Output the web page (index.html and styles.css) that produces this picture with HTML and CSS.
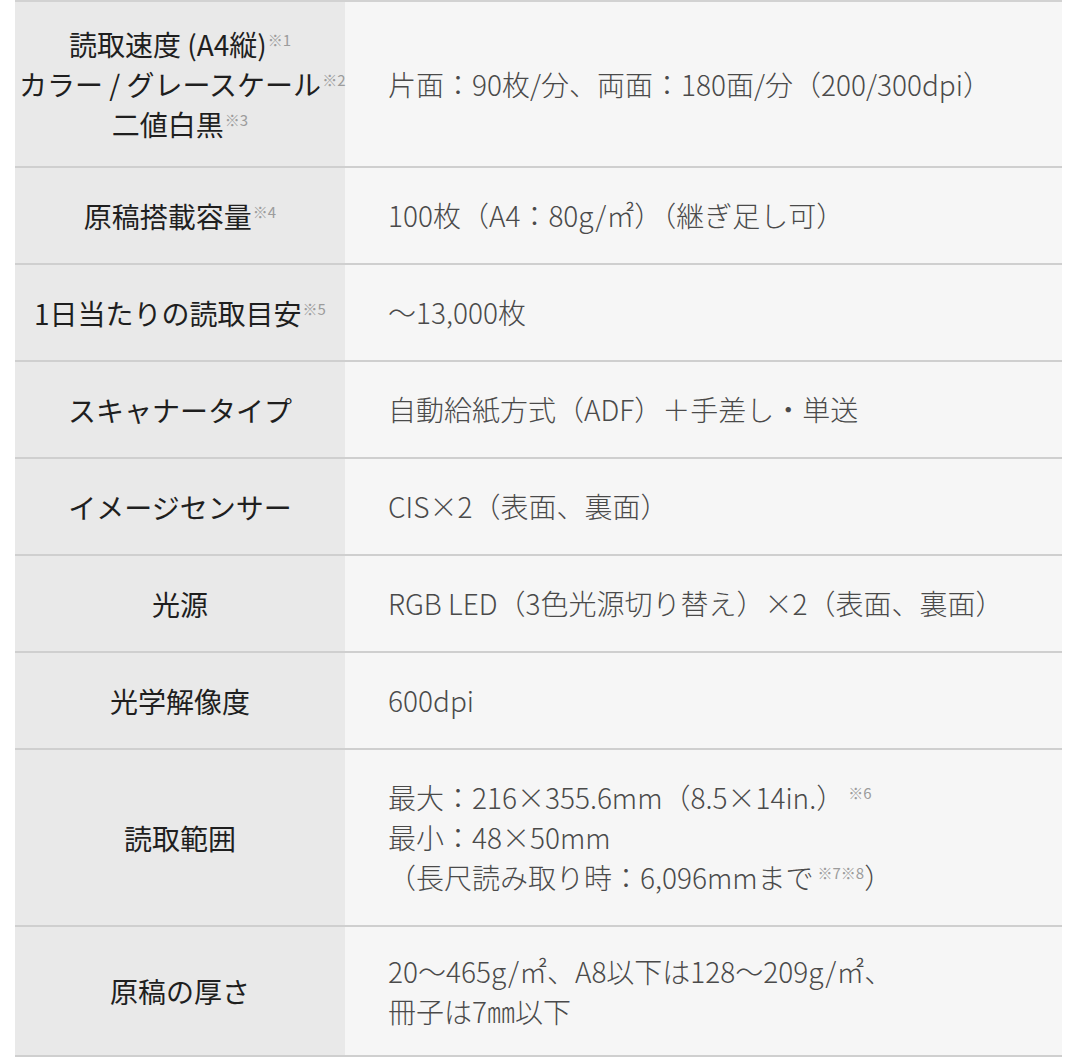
FILE: index.html
```html
<!DOCTYPE html>
<html lang="ja">
<head>
<meta charset="utf-8">
<title>仕様</title>
<link rel="stylesheet" href="styles.css">
</head>
<body>
<table class="spec">
  <tr>
    <th class="head-first">読取速度 (A4縦)<span class="note">※1</span><br>カラー / グレースケール<span class="note">※2</span><br>二値白黒<span class="note">※3</span></th>
    <td>片面：90枚/分、両面：180面/分（200/300dpi）</td>
  </tr>
  <tr>
    <th>原稿搭載容量<span class="note">※4</span></th>
    <td>100枚（A4：80g/㎡）（継ぎ足し可）</td>
  </tr>
  <tr>
    <th>1日当たりの読取目安<span class="note">※5</span></th>
    <td>～13,000枚</td>
  </tr>
  <tr>
    <th>スキャナータイプ</th>
    <td>自動給紙方式（ADF）＋手差し・単送</td>
  </tr>
  <tr>
    <th>イメージセンサー</th>
    <td>CIS×2（表面、裏面）</td>
  </tr>
  <tr>
    <th>光源</th>
    <td>RGB LED（3色光源切り替え）×2（表面、裏面）</td>
  </tr>
  <tr>
    <th>光学解像度</th>
    <td>600dpi</td>
  </tr>
  <tr>
    <th>読取範囲</th>
    <td>最大：216×355.6mm（8.5×14in.）<span class="note">※6</span><br>最小：48×50mm<br>（長尺読み取り時：6,096mmまで<span class="note">※7※8</span>）</td>
  </tr>
  <tr class="last">
    <th>原稿の厚さ</th>
    <td>20～465g/㎡、A8以下は128～209g/㎡、<br>冊子は7㎜以下</td>
  </tr>
</table>
</body>
</html>
```
FILE: styles.css
```css
html, body {
  margin: 0;
  padding: 0;
  background: #ffffff;
}

body {
  font-family: "Noto Sans CJK JP", "Noto Sans", sans-serif;
}

.spec {
  margin-left: 15px;
  width: 1047px;
  border-collapse: collapse;
  border-top: 2px solid #d2d2d2;
  table-layout: fixed;
}

.spec tr {
  border-bottom: 2px solid #cfcfcf;
}

.spec th {
  width: 330px;
  box-sizing: border-box;
  background: #e9e9e9;
  color: #1f1f1f;
  font-size: 28px;
  font-weight: 400;
  line-height: 40px;
  text-align: center;
  vertical-align: middle;
  padding: 22px 4px;
  white-space: nowrap;
}

.spec td {
  background: #f6f6f6;
  color: #4a4a4a;
  font-size: 28px;
  font-weight: 300;
  line-height: 40px;
  text-align: left;
  vertical-align: middle;
  padding: 27px 20px 28px 43px;
  white-space: nowrap;
}

.spec .last td {
  padding-top: 24px;
  padding-bottom: 24px;
}

.note {
  font-size: 15px;
  font-weight: 400;
  color: #9c9c9c;
  vertical-align: 10px;
  line-height: 0;
  margin-left: 1px;
}

.spec td .note {
  margin-left: 4px;
}
```
